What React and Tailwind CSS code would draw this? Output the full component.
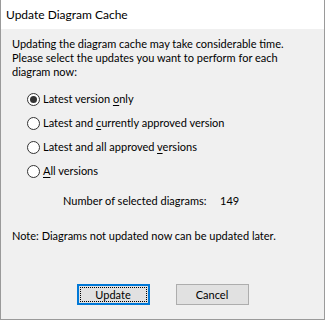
import React from 'react'

const font = { fontFamily: 'Lato, "Noto Sans", sans-serif' }

// Radio with optional mnemonic letter underlined (Windows style)
function Radio({ checked, before, key_, after }) {
  return (
    <div className="flex h-6 items-center">
      <span className="flex h-[13px] w-[13px] shrink-0 items-center justify-center rounded-full border border-[#333] bg-white">
        {checked && <span className="h-[7px] w-[7px] rounded-full bg-[#333]" />}
      </span>
      <span className="ml-[3px]">
        {before}
        <span className="underline underline-offset-2">{key_}</span>
        {after}
      </span>
    </div>
  )
}

export default function App() {
  return (
    <div
      className="flex h-[320px] w-[325px] flex-col whitespace-nowrap border-x border-b border-[#9a9a9a] bg-[#f0f0f0] text-[11px] text-black"
      style={font}
    >
      <div className="flex h-[29px] shrink-0 items-center bg-white pl-[5px] text-[12px]">
        Update Diagram Cache
      </div>
      <div className="flex flex-1 flex-col px-[11px] pt-[8px] leading-[14px]">
        <p>
          Updating the diagram cache may take considerable time.
          <br />
          Please select the updates you want to perform for each
          <br />
          diagram now:
        </p>
        <div className="mt-[8px] pl-[15px]">
          <Radio checked before="Latest version " key_="o" after="nly" />
          <Radio before="Latest and " key_="c" after="urrently approved version" />
          <Radio before="Latest and all approved " key_="v" after="ersions" />
          <Radio before="" key_="A" after="ll versions" />
        </div>
        <div className="mt-[11px] flex pl-[51px]">
          <span className="w-[157px]">Number of selected diagrams:</span>
          <span>149</span>
        </div>
        <p className="mt-[21px]">Note: Diagrams not updated now can be updated later.</p>
        <div className="mt-[41px] flex justify-center gap-[26px]">
          <button className="flex h-[21px] w-[73px] items-center justify-center border-2 border-[#0078d7] bg-[#e1e1e1] p-[1px]">
            <span className="flex h-full w-full items-center justify-center border border-dotted border-black">
              Update
            </span>
          </button>
          <button className="flex h-[21px] w-[73px] items-center justify-center border border-[#adadad] bg-[#e1e1e1]">
            Cancel
          </button>
        </div>
      </div>
    </div>
  )
}
